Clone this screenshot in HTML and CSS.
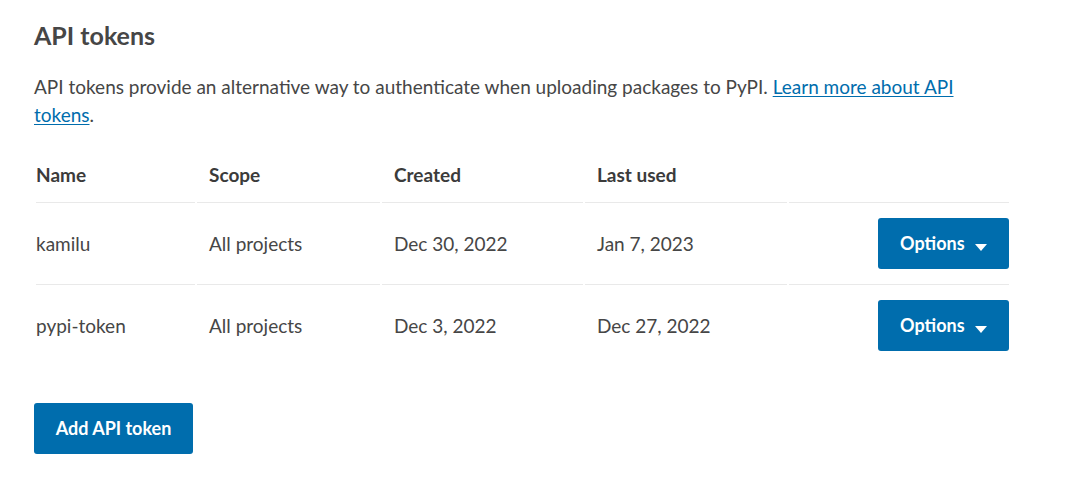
FILE: index.html
```html
<!DOCTYPE html>
<html lang="en">
<head>
<meta charset="utf-8">
<title>API tokens</title>
<link rel="stylesheet" href="styles.css">
</head>
<body>
<section class="tokens">
  <h2 class="tokens__title">API tokens</h2>
  <p class="tokens__intro">API tokens provide an alternative way to authenticate when uploading packages to PyPI. <a class="tokens__link" href="#">Learn more about API tokens</a>.</p>
  <table class="table">
    <thead>
      <tr>
        <th class="table__cell table__cell--name">Name</th>
        <th class="table__cell table__cell--scope">Scope</th>
        <th class="table__cell table__cell--created">Created</th>
        <th class="table__cell table__cell--used">Last used</th>
        <th class="table__cell table__cell--action"></th>
      </tr>
    </thead>
    <tbody>
      <tr class="table__row">
        <td class="table__cell table__cell--name">kamilu</td>
        <td class="table__cell">All projects</td>
        <td class="table__cell">Dec 30, 2022</td>
        <td class="table__cell">Jan 7, 2023</td>
        <td class="table__cell table__cell--action"><button class="btn btn--options">Options <span class="btn__caret"></span></button></td>
      </tr>
      <tr class="table__row table__row--last">
        <td class="table__cell table__cell--name">pypi-token</td>
        <td class="table__cell">All projects</td>
        <td class="table__cell">Dec 3, 2022</td>
        <td class="table__cell">Dec 27, 2022</td>
        <td class="table__cell table__cell--action"><button class="btn btn--options">Options <span class="btn__caret"></span></button></td>
      </tr>
    </tbody>
  </table>
  <button class="btn btn--add">Add API token</button>
</section>
</body>
</html>
```
FILE: styles.css
```css
html, body {
  margin: 0;
  padding: 0;
  background: #ffffff;
}

body {
  font-family: "Lato", "Liberation Sans", sans-serif;
  color: #464646;
  font-size: 19px;
}

.tokens {
  width: 975px;
  padding: 20px 0 0 34px;
}

.tokens__title {
  margin: 0;
  font-size: 25px;
  line-height: 31px;
  font-weight: 700;
  color: #464646;
}

.tokens__intro {
  margin: 22px 0 20px 0;
  font-size: 19px;
  line-height: 28px;
}

.tokens__link {
  color: #006dad;
  text-decoration: underline;
  text-underline-offset: 2px;
}

.table {
  border-collapse: separate;
  border-spacing: 2px 0;
  table-layout: fixed;
  width: 977px;
}

.table__cell {
  text-align: left;
  padding: 15px 12px;
  line-height: 22px;
  font-size: 19px;
  border-bottom: 1px solid #e9e9e9;
  vertical-align: middle;
}

th.table__cell {
  font-weight: 700;
  color: #3b3b3b;
  padding-bottom: 16px;
}

td.table__cell {
  line-height: 51px;
}

.table__cell--name {
  padding-left: 0;
  width: 147px;
}

.table__cell--scope {
  width: 159px;
}

.table__cell--created {
  width: 177px;
}

.table__cell--used {
  width: 178px;
}

.table__cell--action {
  text-align: right;
  padding-right: 0;
  width: 208px;
}

.table__row--last .table__cell {
  border-bottom: none;
}

.btn {
  display: inline-block;
  height: 51px;
  padding: 0;
  border: none;
  border-radius: 3px;
  background: #006dad;
  color: #ffffff;
  font-family: inherit;
  font-size: 18px;
  font-weight: 700;
  line-height: 51px;
  vertical-align: middle;
  cursor: pointer;
}

.btn--options {
  display: block;
  margin-left: auto;
  width: 131px;
  text-align: center;
}

.btn__caret {
  display: inline-block;
  width: 0;
  height: 0;
  margin-left: 6px;
  border-left: 6px solid transparent;
  border-right: 6px solid transparent;
  border-top: 7px solid #ffffff;
  vertical-align: -1px;
}

.btn--add {
  margin-top: 37px;
  width: 159px;
}
```
